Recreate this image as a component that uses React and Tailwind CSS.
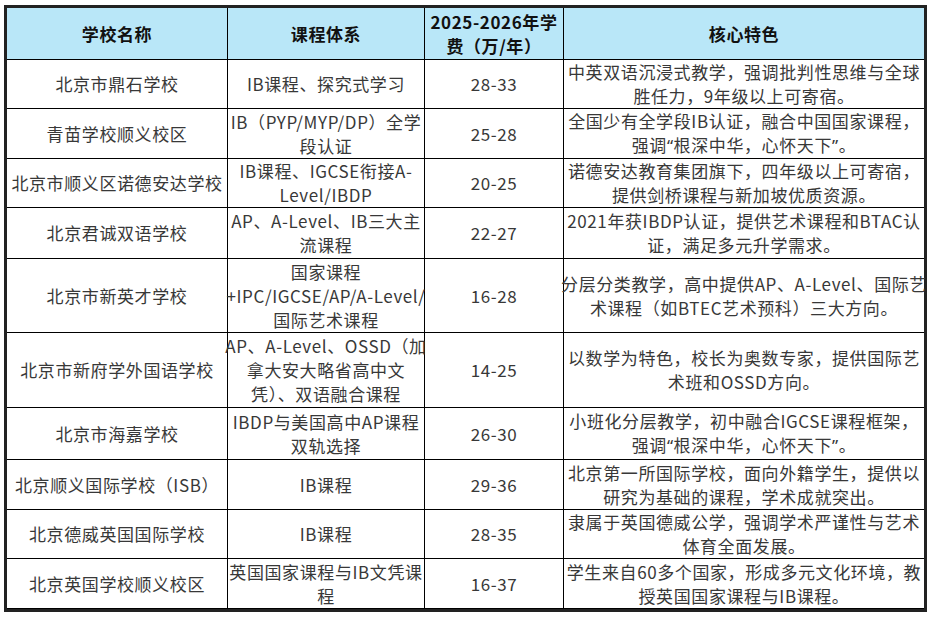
import React from 'react';

const rowHeights = ['h-[49px]', 'h-[49px]', 'h-[50px]', 'h-[51px]', 'h-[74px]', 'h-[75px]', 'h-[52px]', 'h-[50px]', 'h-[49px]', 'h-[50px]'];

// half-width quotes, as in the sheet
const Q = ({ children }) => (
  <span style={{ fontFamily: '"Noto Sans", sans-serif' }}>{children}</span>
);

const motto = (
  <>
    强调<Q>“</Q>根深中华，心怀天下<Q>”</Q>。
  </>
);

const schools = [
  {
    name: ['北京市鼎石学校'],
    course: ['IB课程、探究式学习'],
    fee: '28-33',
    feature: ['中英双语沉浸式教学，强调批判性思维与全球', '胜任力，9年级以上可寄宿。'],
  },
  {
    name: ['青苗学校顺义校区'],
    course: ['IB（PYP/MYP/DP）全学', '段认证'],
    fee: '25-28',
    feature: ['全国少有全学段IB认证，融合中国国家课程，', motto],
  },
  {
    name: ['北京市顺义区诺德安达学校'],
    course: ['IB课程、IGCSE衔接A-', 'Level/IBDP'],
    fee: '20-25',
    feature: ['诺德安达教育集团旗下，四年级以上可寄宿，', '提供剑桥课程与新加坡优质资源。'],
  },
  {
    name: ['北京君诚双语学校'],
    course: ['AP、A-Level、IB三大主', '流课程'],
    fee: '22-27',
    feature: ['2021年获IBDP认证，提供艺术课程和BTAC认', '证，满足多元升学需求。'],
  },
  {
    name: ['北京市新英才学校'],
    course: ['国家课程', '+IPC/IGCSE/AP/A-Level/', '国际艺术课程'],
    fee: '16-28',
    feature: ['分层分类教学，高中提供AP、A-Level、国际艺', '术课程（如BTEC艺术预科）三大方向。'],
  },
  {
    name: ['北京市新府学外国语学校'],
    course: ['AP、A-Level、OSSD（加', '拿大安大略省高中文', '凭）、双语融合课程'],
    fee: '14-25',
    feature: ['以数学为特色，校长为奥数专家，提供国际艺', '术班和OSSD方向。'],
  },
  {
    name: ['北京市海嘉学校'],
    course: ['IBDP与美国高中AP课程', '双轨选择'],
    fee: '26-30',
    feature: ['小班化分层教学，初中融合IGCSE课程框架，', motto],
  },
  {
    name: ['北京顺义国际学校（ISB）'],
    course: ['IB课程'],
    fee: '29-36',
    feature: ['北京第一所国际学校，面向外籍学生，提供以', '研究为基础的课程，学术成就突出。'],
  },
  {
    name: ['北京德威英国国际学校'],
    course: ['IB课程'],
    fee: '28-35',
    feature: ['隶属于英国德威公学，强调学术严谨性与艺术', '体育全面发展。'],
  },
  {
    name: ['北京英国学校顺义校区'],
    course: ['英国国家课程与IB文凭课', '程'],
    fee: '16-37',
    feature: ['学生来自60多个国家，形成多元文化环境，教', '授英国国家课程与IB课程。'],
  },
];

const Lines = ({ lines }) => (
  <div className="text-center leading-[24px]">
    {lines.map((l, i) => (
      <div key={i} className="whitespace-nowrap">{l}</div>
    ))}
  </div>
);

const Cell = ({ children, last }) => (
  <div
    className={`flex items-center justify-center overflow-visible border-b border-black ${last ? '' : 'border-r'}`}
  >
    {children}
  </div>
);

export default function App() {
  return (
    <div
      className="w-[930px] h-[620px] bg-white pl-[4px] pt-[5px] text-[17px] tracking-[0.6px] text-[#383838]"
      style={{ fontFamily: '"Noto Sans CJK SC", "Noto Sans", sans-serif' }}
    >
      <div className="w-[923px] border-[3px] border-[#222] bg-white">
        <div className="grid grid-cols-[221px_197px_139px_360px] h-[52px] bg-[#b9e7f8] font-bold text-[#111]">
          <Cell><Lines lines={['学校名称']} /></Cell>
          <Cell><Lines lines={['课程体系']} /></Cell>
          <Cell><Lines lines={['2025-2026年学', '费（万/年）']} /></Cell>
          <Cell last><Lines lines={['核心特色']} /></Cell>
        </div>
        {schools.map((s, i) => (
          <div key={i} className={`grid grid-cols-[221px_197px_139px_360px] ${rowHeights[i]}`}>
            <Cell><Lines lines={s.name} /></Cell>
            <Cell><Lines lines={s.course} /></Cell>
            <Cell><Lines lines={[s.fee]} /></Cell>
            <Cell last><Lines lines={s.feature} /></Cell>
          </div>
        ))}
      </div>
    </div>
  );
}
